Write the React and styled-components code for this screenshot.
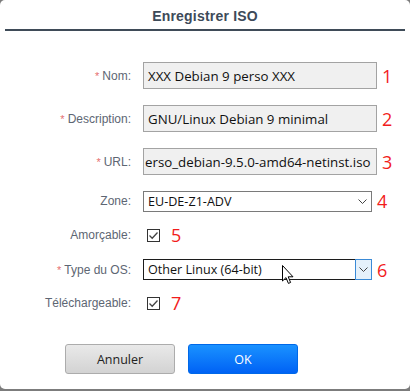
import React from "react";
import styled, { createGlobalStyle } from "styled-components";

const GlobalStyle = createGlobalStyle`
  html, body {
    margin: 0;
    padding: 0;
    background: #7c7c7c;
  }
`;

function Chevron() {
  return (
    <svg width="9" height="5" viewBox="0 0 9 5">
      <path d="M0.5 0.5 L4.5 4.5 L8.5 0.5" fill="none" stroke="#444" strokeWidth="1" />
    </svg>
  );
}

function Check() {
  return (
    <svg width="11" height="11" viewBox="0 0 11 11">
      <path d="M1.5 5.5 L4.2 8.2 L9.5 2.5" fill="none" stroke="#444" strokeWidth="1.3" />
    </svg>
  );
}

function Cursor() {
  return (
    <svg width="12" height="20" viewBox="0 0 12 20">
      <path
        d="M0.5 0.5 L0.5 16 L4 12.6 L6.4 18.4 L8.6 17.5 L6.2 11.8 L11 11.8 Z"
        fill="#fff"
        stroke="#000"
        strokeWidth="1"
        strokeLinejoin="round"
      />
    </svg>
  );
}

function Label({ required, children }) {
  return (
    <LabelCell>
      {required && <Star>*</Star>}
      {children}
    </LabelCell>
  );
}

function App() {
  return (
    <>
      <GlobalStyle />
      <Dialog>
        <Header>
          <Title>Enregistrer ISO</Title>
        </Header>
        <Form>
          <Row h={43}>
            <Label required>Nom:</Label>
            <Field>
              <TextBox>XXX Debian 9 perso XXX</TextBox>
              <Num>1</Num>
            </Field>
          </Row>
          <Row h={43}>
            <Label required>Description:</Label>
            <Field>
              <TextBox>GNU/Linux Debian 9 minimal</TextBox>
              <Num>2</Num>
            </Field>
          </Row>
          <Row h={43}>
            <Label required>URL:</Label>
            <Field>
              <TextBox tight>erso_debian-9.5.0-amd64-netinst.iso</TextBox>
              <Num>3</Num>
            </Field>
          </Row>
          <Row h={36}>
            <Label>Zone:</Label>
            <Field>
              <Select>
                <SelectText>EU-DE-Z1-ADV</SelectText>
                <Arrow>
                  <Chevron />
                </Arrow>
              </Select>
              <Num>4</Num>
            </Field>
          </Row>
          <Row h={32}>
            <Label>Amorçable:</Label>
            <Field>
              <CheckBox>
                <Check />
              </CheckBox>
              <Num wide>5</Num>
            </Field>
          </Row>
          <Row h={37}>
            <Label required>Type du OS:</Label>
            <Field>
              <Select focused>
                <SelectText>Other Linux (64-bit)</SelectText>
                <Arrow focused>
                  <Chevron />
                </Arrow>
                <Pointer>
                  <Cursor />
                </Pointer>
              </Select>
              <Num>6</Num>
            </Field>
          </Row>
          <Row h={30}>
            <Label>Téléchargeable:</Label>
            <Field>
              <CheckBox>
                <Check />
              </CheckBox>
              <Num wide>7</Num>
            </Field>
          </Row>
        </Form>
        <Buttons>
          <Button>Annuler</Button>
          <Button primary>OK</Button>
        </Buttons>
      </Dialog>
    </>
  );
}

export default App;

const Dialog = styled.div`
  width: 410px;
  height: 389px;
  background: #ffffff;
  border-radius: 5px;
  display: flex;
  flex-direction: column;
  font-family: "Liberation Sans", Arial, sans-serif;
`;

const Header = styled.div`
  margin: 0 5px;
  height: 29px;
  border-bottom: 2px solid #3f4b58;
  display: flex;
  align-items: center;
  justify-content: center;
`;

const Title = styled.div`
  font-size: 14px;
  font-weight: bold;
  color: #3d4a59;
  letter-spacing: 0.2px;
  padding-top: 2px;
`;

const Form = styled.div`
  padding-top: 23px;
  display: flex;
  flex-direction: column;
`;

const Row = styled.div`
  height: ${(p) => p.h}px;
  display: grid;
  grid-template-columns: 131px 1fr;
  column-gap: 12px;
  align-items: center;
`;

const LabelCell = styled.div`
  text-align: right;
  font-size: 12px;
  color: #5d6673;
`;

const Star = styled.span`
  color: #e66f6f;
  font-size: 11px;
  margin-right: 3px;
`;

const Field = styled.div`
  display: flex;
  align-items: center;
`;

const TextBox = styled.div`
  box-sizing: border-box;
  width: 234px;
  height: 27px;
  border: 1px solid #a3a3a3;
  background: #f0f0f0;
  padding: 0 ${(p) => (p.tight ? "1px" : "4px")};
  display: flex;
  align-items: center;
  font-family: "Open Sans", sans-serif;
  font-size: 13.3px;
  color: #111;
  white-space: nowrap;
  overflow: hidden;
`;

const Num = styled.span`
  margin-left: ${(p) => (p.wide ? "11px" : "5px")};
  font-family: "Open Sans", sans-serif;
  font-size: 18px;
  line-height: 18px;
  color: #f21c1c;
`;

const Select = styled.div`
  position: relative;
  box-sizing: border-box;
  width: 229px;
  height: 21px;
  border: 1px solid ${(p) => (p.focused ? "#1c1c1c" : "#7a7a7a")};
  background: #fff;
  display: flex;
  align-items: center;
`;

const SelectText = styled.span`
  flex: 1;
  padding-left: 4px;
  font-family: "Open Sans", sans-serif;
  font-size: 12.6px;
  color: #111;
`;

const Arrow = styled.div`
  box-sizing: border-box;
  width: 17px;
  height: ${(p) => (p.focused ? "21px" : "19px")};
  margin-right: ${(p) => (p.focused ? "-1px" : "0")};
  display: flex;
  align-items: center;
  justify-content: center;
  background: ${(p) => (p.focused ? "#e5f1fb" : "transparent")};
  border: ${(p) => (p.focused ? "1px solid #3a8ad6" : "none")};
`;

const Pointer = styled.div`
  position: absolute;
  left: 138px;
  top: 5px;
  line-height: 0;
`;

const CheckBox = styled.div`
  box-sizing: border-box;
  margin-left: 4px;
  width: 13px;
  height: 13px;
  border: 1px solid #333;
  background: #fff;
  display: flex;
  align-items: center;
  justify-content: center;
`;

const Buttons = styled.div`
  margin-top: 26px;
  padding-left: 65px;
  display: flex;
  gap: 13px;
`;

const Button = styled.div`
  box-sizing: border-box;
  width: 110px;
  height: 30px;
  border-radius: 3px;
  display: flex;
  align-items: center;
  justify-content: center;
  font-family: "Open Sans", sans-serif;
  font-size: 12.5px;
  color: ${(p) => (p.primary ? "#ffffff" : "#222222")};
  border: 1px solid ${(p) => (p.primary ? "#0068e8" : "#acacac")};
  background: ${(p) =>
    p.primary
      ? "linear-gradient(#1a92ff, #0062f5)"
      : "linear-gradient(#e9e9e9, #d3d3d3)"};
`;
